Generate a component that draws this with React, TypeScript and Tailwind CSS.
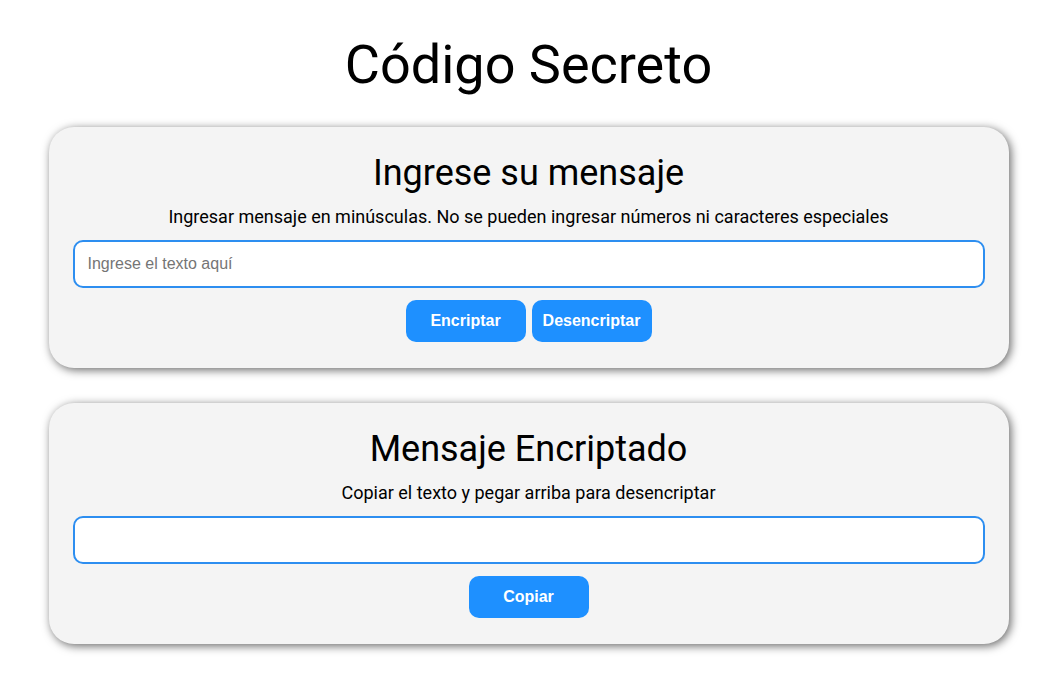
import React from "react";

function Card({
  title,
  subtitle,
  placeholder,
  buttons,
}: {
  title: string;
  subtitle: string;
  placeholder?: string;
  buttons: string[];
}) {
  return (
    <section className="w-[960px] mx-auto bg-[#f4f4f4] rounded-[25px] shadow-[2px_2px_10px_rgba(0,0,0,0.6)] px-6 pt-[25px] pb-[26px] flex flex-col items-center">
      <h2 className="text-[36px] leading-[42px] font-normal text-black font-['Roboto',sans-serif]">{title}</h2>
      <p className="mt-3 text-[18px] leading-[21px] text-black font-['Roboto',sans-serif]">{subtitle}</p>
      <input
        type="text"
        placeholder={placeholder}
        className="mt-[13px] w-full h-[48px] bg-white border-2 border-[#2d8ef0] rounded-[10px] px-[13px] text-[16px] font-['Liberation_Sans',Arial,sans-serif] placeholder:text-[#757575] outline-none"
      />
      <div className="mt-3 flex gap-[6px]">
        {buttons.map((b) => (
          <button
            key={b}
            className="w-[120px] h-[42px] bg-[#1e90ff] text-white font-bold text-[16px] rounded-[10px] font-['Liberation_Sans',Arial,sans-serif]"
          >
            {b}
          </button>
        ))}
      </div>
    </section>
  );
}

export default function App() {
  return (
    <div className="min-h-[685px] bg-white pt-[33px] font-['Roboto',sans-serif]">
      <h1 className="text-center text-[54px] leading-[63px] font-normal text-black">Código Secreto</h1>
      <div className="mt-[31px] flex flex-col gap-[35px]">
        <Card
          title="Ingrese su mensaje"
          subtitle="Ingresar mensaje en minúsculas. No se pueden ingresar números ni caracteres especiales"
          placeholder="Ingrese el texto aquí"
          buttons={["Encriptar", "Desencriptar"]}
        />
        <Card
          title="Mensaje Encriptado"
          subtitle="Copiar el texto y pegar arriba para desencriptar"
          buttons={["Copiar"]}
        />
      </div>
    </div>
  );
}
